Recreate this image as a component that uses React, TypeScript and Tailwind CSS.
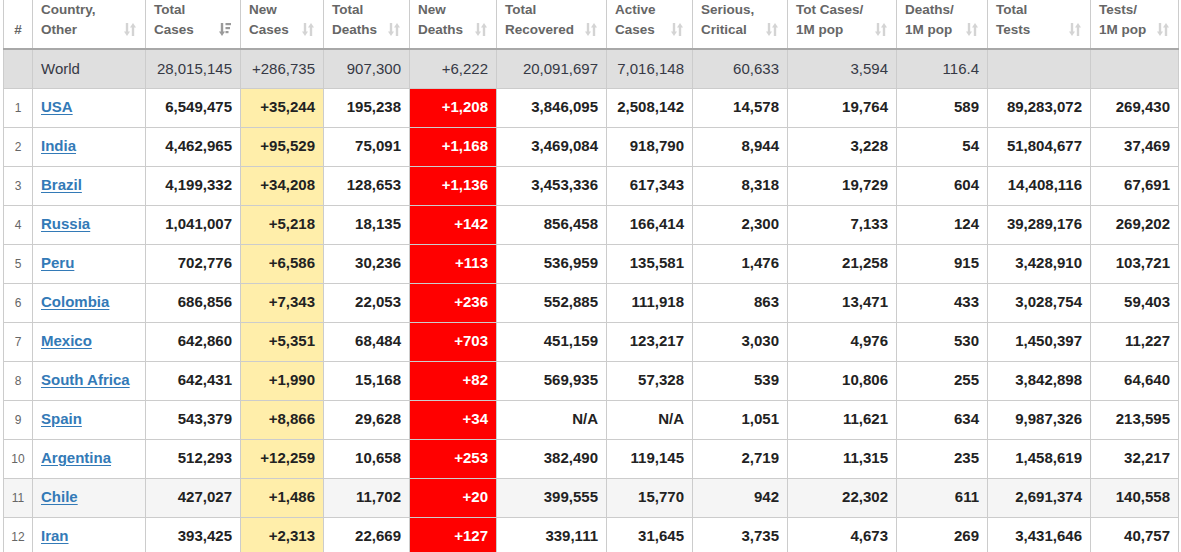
type Row = {
  n: number;
  country: string;
  v: string[];
};

const headers: string[][] = [
  ["#"],
  ["Country,", "Other"],
  ["Total", "Cases"],
  ["New", "Cases"],
  ["Total", "Deaths"],
  ["New", "Deaths"],
  ["Total", "Recovered"],
  ["Active", "Cases"],
  ["Serious,", "Critical"],
  ["Tot Cases/", "1M pop"],
  ["Deaths/", "1M pop"],
  ["Total", "Tests"],
  ["Tests/", "1M pop"],
];

const widths = [
  "w-[29px]",
  "w-[113px]",
  "w-[95px]",
  "w-[83px]",
  "w-[86px]",
  "w-[87px]",
  "w-[110px]",
  "w-[86px]",
  "w-[95px]",
  "w-[109px]",
  "w-[91px]",
  "w-[103px]",
  "w-[88px]",
];

const world = [
  "28,015,145",
  "+286,735",
  "907,300",
  "+6,222",
  "20,091,697",
  "7,016,148",
  "60,633",
  "3,594",
  "116.4",
  "",
  "",
];

const rows: Row[] = [
  { n: 1, country: "USA", v: ["6,549,475", "+35,244", "195,238", "+1,208", "3,846,095", "2,508,142", "14,578", "19,764", "589", "89,283,072", "269,430"] },
  { n: 2, country: "India", v: ["4,462,965", "+95,529", "75,091", "+1,168", "3,469,084", "918,790", "8,944", "3,228", "54", "51,804,677", "37,469"] },
  { n: 3, country: "Brazil", v: ["4,199,332", "+34,208", "128,653", "+1,136", "3,453,336", "617,343", "8,318", "19,729", "604", "14,408,116", "67,691"] },
  { n: 4, country: "Russia", v: ["1,041,007", "+5,218", "18,135", "+142", "856,458", "166,414", "2,300", "7,133", "124", "39,289,176", "269,202"] },
  { n: 5, country: "Peru", v: ["702,776", "+6,586", "30,236", "+113", "536,959", "135,581", "1,476", "21,258", "915", "3,428,910", "103,721"] },
  { n: 6, country: "Colombia", v: ["686,856", "+7,343", "22,053", "+236", "552,885", "111,918", "863", "13,471", "433", "3,028,754", "59,403"] },
  { n: 7, country: "Mexico", v: ["642,860", "+5,351", "68,484", "+703", "451,159", "123,217", "3,030", "4,976", "530", "1,450,397", "11,227"] },
  { n: 8, country: "South Africa", v: ["642,431", "+1,990", "15,168", "+82", "569,935", "57,328", "539", "10,806", "255", "3,842,898", "64,640"] },
  { n: 9, country: "Spain", v: ["543,379", "+8,866", "29,628", "+34", "N/A", "N/A", "1,051", "11,621", "634", "9,987,326", "213,595"] },
  { n: 10, country: "Argentina", v: ["512,293", "+12,259", "10,658", "+253", "382,490", "119,145", "2,719", "11,315", "235", "1,458,619", "32,217"] },
  { n: 11, country: "Chile", v: ["427,027", "+1,486", "11,702", "+20", "399,555", "15,770", "942", "22,302", "611", "2,691,374", "140,558"] },
  { n: 12, country: "Iran", v: ["393,425", "+2,313", "22,669", "+127", "339,111", "31,645", "3,735", "4,673", "269", "3,431,646", "40,757"] },
];

// inactive sort arrows (down + up)
const SortIcon = () => (
  <svg width="12" height="15" viewBox="0 0 12 15" className="shrink-0">
    <g fill="#d4d4d4">
      <rect x="1.8" y="1" width="2.4" height="9" />
      <path d="M0 9.5h6l-3 4.5z" />
      <rect x="7.8" y="5" width="2.4" height="9" />
      <path d="M6 5.5h6l-3-4.5z" />
    </g>
  </svg>
);

// active sort: down arrow with decreasing bars
const SortActive = () => (
  <svg width="12" height="15" viewBox="0 0 12 15" className="shrink-0">
    <g fill="#9a9a9a">
      <rect x="1.8" y="1" width="2.4" height="9" />
      <path d="M0 9.5h6l-3 4.5z" />
      <rect x="6.5" y="1" width="5.5" height="2.2" />
      <rect x="6.5" y="5" width="4.5" height="2.2" />
      <rect x="6.5" y="9" width="3" height="2.2" />
    </g>
  </svg>
);

export default function App() {
  return (
    <div className="bg-white pl-[3px] font-['Liberation_Sans',Arial,sans-serif]">
      <table className="table-fixed border-collapse w-[1176px]">
        <thead>
          <tr>
            {headers.map((h, i) => (
              <th
                key={i}
                className={`${widths[i]} h-[48px] align-bottom border-x border-[#ccc] border-b-2 border-b-[#a8a8a8] pb-[8px] text-[13.5px] font-bold leading-[20px] text-[#666] ${
                  i === 0 ? "text-center" : "text-left pl-[8px] pr-[9px]"
                }`}
              >
                {i === 0 ? (
                  "#"
                ) : (
                  <div className="flex items-end justify-between">
                    <div>
                      {h.map((l) => (
                        <div key={l} className="whitespace-nowrap">
                          {l}
                        </div>
                      ))}
                    </div>
                    <div className="pb-[3px]">{i === 2 ? <SortActive /> : <SortIcon />}</div>
                  </div>
                )}
              </th>
            ))}
          </tr>
        </thead>
        <tbody>
          <tr className="bg-[#dfdfdf] h-[39px] text-[15px] text-[#363945]">
            <td className="border border-[#ccc]" />
            <td className="border border-[#ccc] pl-[8px] text-left">World</td>
            {world.map((v, i) => (
              <td key={i} className="border border-[#ccc] pr-[8px] text-right">
                {v}
              </td>
            ))}
          </tr>
          {rows.map((r) => (
            <tr
              key={r.n}
              className={`h-[39px] text-[15px] font-bold text-[#222] ${r.n === 11 ? "bg-[#f5f5f5]" : "bg-white"}`}
            >
              <td className="border border-[#ccc] text-center text-[12px] font-normal text-[#666]">{r.n}</td>
              <td className="border border-[#ccc] pl-[8px] text-left">
                <span className="text-[#337ab7] underline underline-offset-[1.5px] whitespace-nowrap">{r.country}</span>
              </td>
              {r.v.map((v, i) => (
                <td
                  key={i}
                  className={`border border-[#ccc] pr-[8px] text-right ${
                    i === 1 ? "bg-[#ffeeaa]" : i === 3 ? "bg-[#ff0000] text-white" : ""
                  }`}
                >
                  {v}
                </td>
              ))}
            </tr>
          ))}
        </tbody>
      </table>
    </div>
  );
}
